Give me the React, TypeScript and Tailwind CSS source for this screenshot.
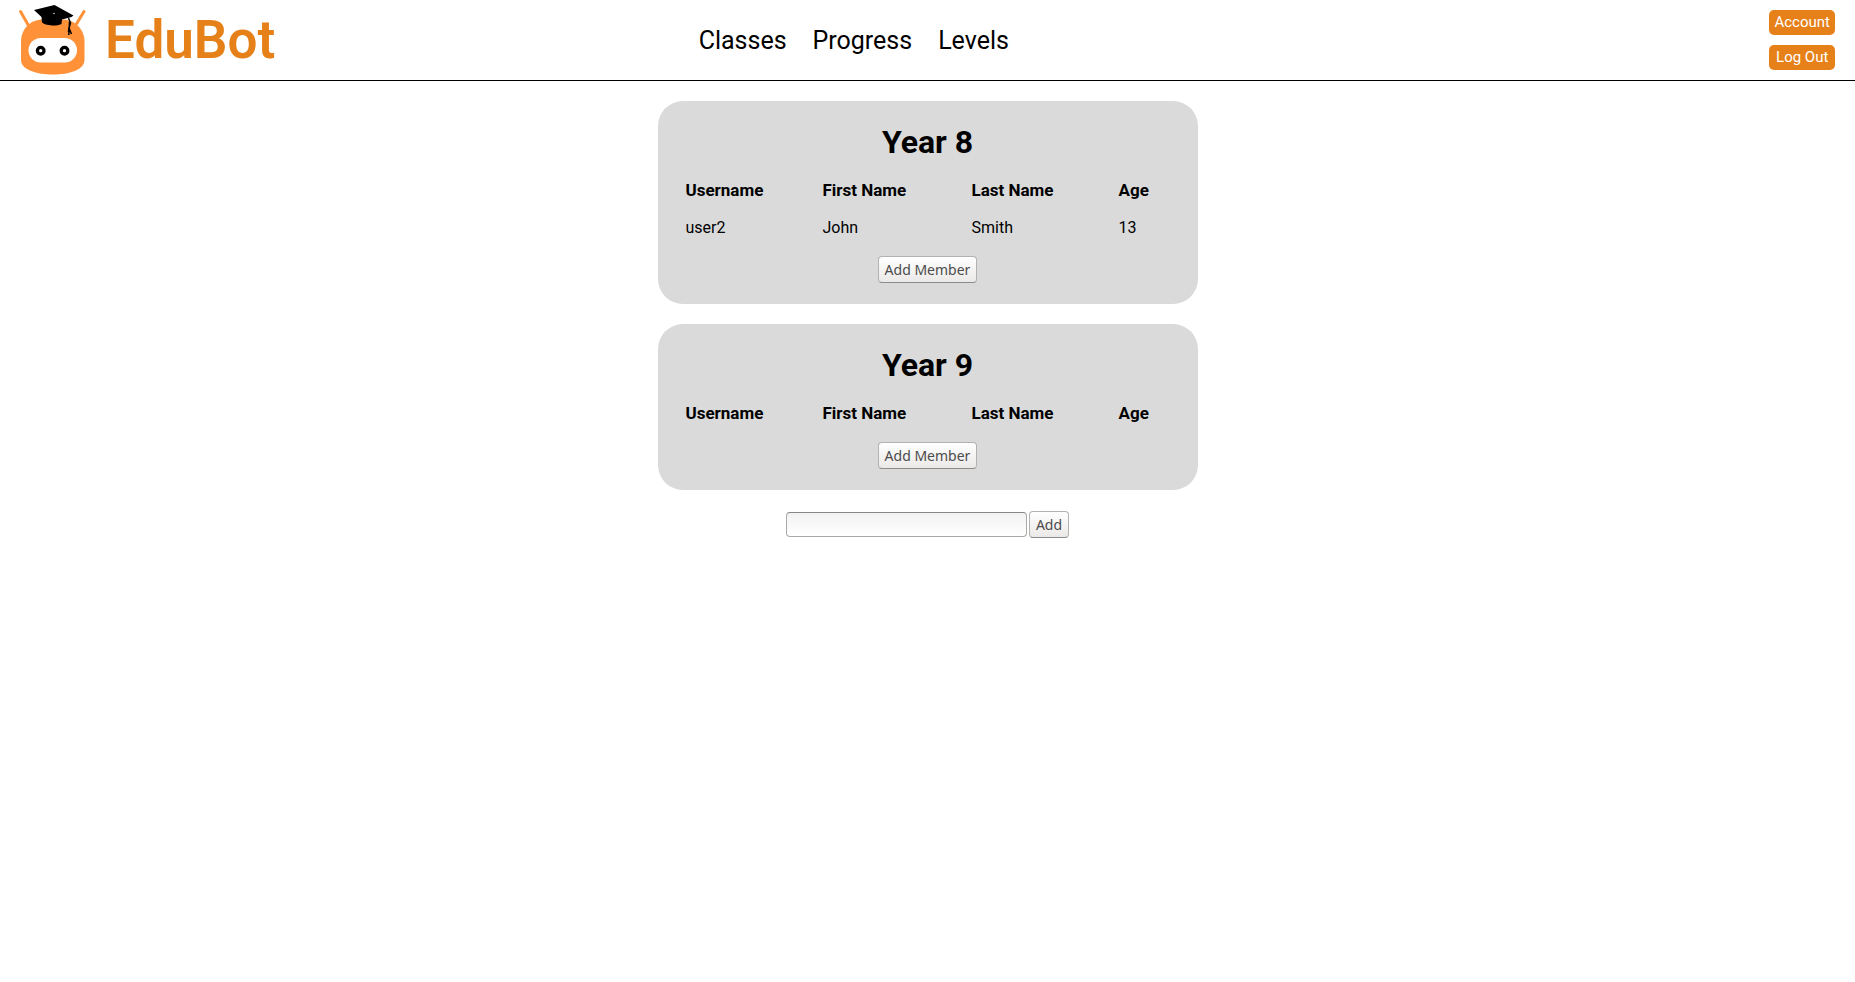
import type { ReactNode } from "react";

type Member = { username: string; first: string; last: string; age: number };
type SchoolClass = { name: string; members: Member[] };

const classes: SchoolClass[] = [
  { name: "Year 8", members: [{ username: "user2", first: "John", last: "Smith", age: 13 }] },
  { name: "Year 9", members: [] },
];

function Logo() {
  return (
    <svg viewBox="0 3 70 75" className="h-[75px] w-[70px] shrink-0" aria-hidden="true">
      <g stroke="#ff9139" strokeWidth="3" strokeLinecap="round">
        <path d="M3.500 11.500 11.500 25.500" />
        <path d="M67 11.500 58.500 25.500" />
      </g>
      <path
        fill="#ff9139"
        d="M4 42C4 29 13 19.500 26 19.500H45C58 19.500 67.500 29 67.500 42V60C67.500 70 52 74.500 36 74.500S4 70 4 60Z"
      />
      <rect x="11.500" y="38" width="48.500" height="24.500" rx="12.250" fill="#fff" />
      <g fill="#fff" stroke="#000" strokeWidth="3.300">
        <circle cx="23.700" cy="50.700" r="3.300" />
        <circle cx="47.500" cy="50.700" r="3.300" />
      </g>
      <path
        fill="#000"
        d="M17 10 37.500 5 56.500 15.500 54.500 17 45 19.500 44.500 24C41 25.500 38 25.800 35 25.500 30 25 26.500 24 25 22.500L24.500 17Z"
      />
      <circle cx="37" cy="13.500" r=".7" fill="#fff" />
      <path d="M51.500 18 53.500 23 52 28 54.500 34M52.500 22 51.800 35M52 27 51.500 32" fill="none" stroke="#000" strokeWidth="1.500" />
    </svg>
  );
}

function PushButton({ type = "button", children }: { type?: "button" | "submit"; children: ReactNode }) {
  return (
    <button
      type={type}
      className="h-[27px] rounded-[4px] border border-[#b3b2b0] border-b-[#8b8b8a] bg-gradient-to-b from-white to-[#ebe9e8] px-[6px] font-['Noto_Sans',sans-serif] text-[14px] leading-6 text-[#4c4c4c]"
    >
      {children}
    </button>
  );
}

function ClassCard({ name, members }: SchoolClass) {
  return (
    <section className="w-full max-w-[540px] rounded-[25px] bg-[#dadada] px-5 py-5 text-center">
      <h2 className="mb-[9px] text-[32px] leading-[42px] font-bold">{name}</h2>
      <table className="mb-[10px] w-full table-fixed text-left text-base leading-[19px]">
        <colgroup>
          <col className="w-[137px]" />
          <col className="w-[149px]" />
          <col className="w-[147px]" />
          <col />
        </colgroup>
        <thead className="text-[17px]">
          <tr>
            {["Username", "First Name", "Last Name", "Age"].map((title) => (
              <th key={title} scope="col" className="px-2 py-[9px] font-bold">
                {title}
              </th>
            ))}
          </tr>
        </thead>
        <tbody>
          {members.map((m) => (
            <tr key={m.username}>
              <td className="px-2 py-[9px]">{m.username}</td>
              <td className="px-2 py-[9px]">{m.first}</td>
              <td className="px-2 py-[9px]">{m.last}</td>
              <td className="px-2 py-[9px]">{m.age}</td>
            </tr>
          ))}
        </tbody>
      </table>
      <div className="pb-px">
        <PushButton>Add Member</PushButton>
      </div>
    </section>
  );
}

const accountLink = "rounded-[5px] bg-[#e6811a] px-[5px] text-center text-[15px] leading-[25px] text-white";

export default function App() {
  return (
    <div className="min-h-screen bg-white font-[Roboto,sans-serif] text-black">
      <header className="flex h-[81px] items-center border-b border-black">
        <a href="#" className="flex w-3/8 items-center gap-[18px] pl-[17px] text-[53px] leading-[80px] font-semibold text-[#e6811a]">
          <Logo />
          EduBot
        </a>
        <nav className="flex gap-[26px] pt-px pl-[3px] text-[25px]">
          <a href="#classes">Classes</a>
          <a href="#progress">Progress</a>
          <a href="#levels">Levels</a>
        </nav>
        <div className="ml-auto flex flex-col gap-[10px] pr-5">
          <a href="#account" className={accountLink}>Account</a>
          <a href="#logout" className={accountLink}>Log Out</a>
        </div>
      </header>
      <main className="flex flex-col items-center gap-5 py-5">
        {classes.map((c) => (
          <ClassCard key={c.name} {...c} />
        ))}
        <form className="flex items-center gap-[2px] pt-px" onSubmit={(e) => e.preventDefault()}>
          <input
            type="text"
            aria-label="Class name"
            className="h-[25px] w-[241px] rounded-[4px] border border-[#a9a9a8] border-t-[#868685] bg-gradient-to-b from-[#f2f2f2] to-white px-1 text-[15px]"
          />
          <PushButton type="submit">Add</PushButton>
        </form>
      </main>
    </div>
  );
}
